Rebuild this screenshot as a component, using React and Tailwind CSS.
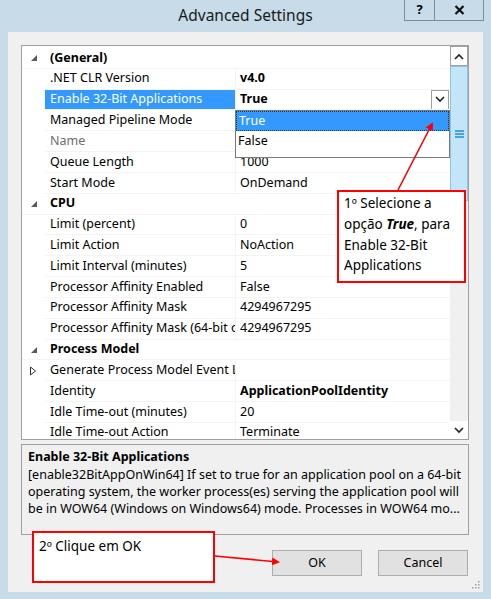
import React from "react";

const font = { fontFamily: '"Noto Sans", "Open Sans", sans-serif' };

const rows = [
  { type: "cat", name: "(General)" },
  { name: ".NET CLR Version", value: "v4.0", bold: true },
  { name: "Enable 32-Bit Applications", value: "True", bold: true, selected: true },
  { name: "Managed Pipeline Mode", value: "Integrated" },
  { name: "Name", value: "DefaultAppPool", gray: true },
  { name: "Queue Length", value: "1000" },
  { name: "Start Mode", value: "OnDemand" },
  { type: "cat", name: "CPU" },
  { name: "Limit (percent)", value: "0" },
  { name: "Limit Action", value: "NoAction" },
  { name: "Limit Interval (minutes)", value: "5" },
  { name: "Processor Affinity Enabled", value: "False" },
  { name: "Processor Affinity Mask", value: "4294967295" },
  { name: "Processor Affinity Mask (64-bit option)", value: "4294967295" },
  { type: "cat", name: "Process Model" },
  { name: "Generate Process Model Event Log Entry", value: "", collapsed: true },
  { name: "Identity", value: "ApplicationPoolIdentity", bold: true },
  { name: "Idle Time-out (minutes)", value: "20" },
  { name: "Idle Time-out Action", value: "Terminate" },
];

function Expanded() {
  return (
    <svg width="8" height="8" viewBox="0 0 8 8">
      <path d="M7 1 L7 7 L1 7 Z" fill="#595959" />
    </svg>
  );
}
function Collapsed() {
  return (
    <svg width="8" height="10" viewBox="0 0 8 10">
      <path d="M1.5 1 L6.5 5 L1.5 9 Z" fill="none" stroke="#333" strokeWidth="1" />
    </svg>
  );
}
function Chevron({ up }) {
  return (
    <svg width="10" height="7" viewBox="0 0 10 7">
      <path d={up ? "M1 6 L5 2 L9 6" : "M1 1 L5 5 L9 1"} fill="none" stroke="#222" strokeWidth="1.6" />
    </svg>
  );
}

function Row({ r }) {
  if (r.type === "cat") {
    return (
      <div className="flex h-[20.83px] shrink-0 items-center border-b border-[#f4f4f4]">
        <div className="flex w-[23px] shrink-0 items-center justify-center pl-[1px]">
          <Expanded />
        </div>
        <div className="pl-[5px] text-[12.5px] font-bold text-black">{r.name}</div>
      </div>
    );
  }
  return (
    <div className="flex h-[20.83px] shrink-0 items-center">
      <div className="flex w-[23px] shrink-0 items-center justify-center pr-[2px]">
        {r.collapsed ? <Collapsed /> : null}
      </div>
      <div
        className={
          "flex h-full w-[190px] shrink-0 items-center overflow-hidden whitespace-nowrap border-b border-[#f4f4f4] pl-[5px] text-[12.5px] " +
          (r.selected ? "bg-[#3399ff] text-white" : r.gray ? "text-[#6d6d6d]" : "text-black")
        }
      >
        {r.name}
      </div>
      <div className="flex h-full flex-1 items-center overflow-hidden whitespace-nowrap border-b border-l border-[#f4f4f4] pl-[4px] text-[12.5px]">
        <span className={(r.bold ? "font-bold " : "") + "text-black"}>{r.value}</span>
        {r.selected ? (
          <div className="ml-auto mr-[1px] flex h-[20px] w-[18px] items-center justify-center border border-[#a0a0a0] bg-white">
            <Chevron />
          </div>
        ) : null}
      </div>
    </div>
  );
}

export default function App() {
  return (
    <div className="relative h-[599px] w-[491px] overflow-hidden bg-[#c7dbe8]" style={font}>
      {/* Title bar */}
      <div className="relative flex h-[32px] items-center justify-center">
        <div className="text-[15.5px] text-[#1a1a1a]">Advanced Settings</div>
        <div className="absolute right-[7px] top-0 flex">
          <div className="flex h-[21px] w-[31px] items-center justify-center border border-t-0 border-[#7f8d98] bg-[#c7dbe8] text-[13px] font-bold text-black">
            ?
          </div>
          <div className="flex h-[21px] w-[49px] items-center justify-center border border-l-0 border-t-0 border-[#7f8d98] bg-[#c7dbe8]">
            <svg width="11" height="10" viewBox="0 0 11 10">
              <path d="M1.5 1 L9.5 9 M9.5 1 L1.5 9" stroke="#111" strokeWidth="2.2" />
            </svg>
          </div>
        </div>
      </div>

      {/* Client area */}
      <div className="mx-[8px] flex h-[560px] flex-col bg-[#f0f0f0] pl-[13px] pr-[14px] pt-[13px]">
        {/* Property grid */}
        <div className="flex h-[395px] w-[448px] border border-[#a0a0a0] bg-white">
          <div className="flex flex-1 flex-col overflow-hidden pt-[2px]">
            {rows.map((r, i) => (
              <Row key={i} r={r} />
            ))}
          </div>
          {/* Scrollbar */}
          <div className="flex w-[18px] flex-col bg-[#f0f0f0]">
            <div className="flex h-[20px] items-center justify-center border border-[#a0a0a0] bg-white">
              <Chevron up />
            </div>
            <div className="flex h-[135px] items-center justify-center border border-[#86c6e8] bg-[#c4e5f7]">
              <svg width="9" height="8" viewBox="0 0 9 8">
                <path d="M0 1 H9 M0 4 H9 M0 7 H9" stroke="#1e8fd6" strokeWidth="1.4" />
              </svg>
            </div>
            <div className="flex-1" />
            <div className="flex h-[18px] items-center justify-center bg-white">
              <Chevron />
            </div>
          </div>
        </div>

        {/* Description */}
        <div className="mt-[4px] h-[91px] w-[448px] border border-[#a0a0a0] bg-[#f0f0f0] px-[6px] pt-[3px]">
          <div className="text-[12.5px] font-bold leading-[18px] text-black">Enable 32-Bit Applications</div>
          <div className="text-[12.5px] leading-[17px] text-black">
            [enable32BitAppOnWin64] If set to true for an application pool on a 64-bit operating system, the worker process(es) serving the application pool will be in WOW64 (Windows on Windows64) mode. Processes in WOW64 mo...
          </div>
        </div>

        {/* Buttons */}
        <div className="mt-[15px] flex justify-end gap-[16px] pr-[1px]">
          <button className="h-[26px] w-[90px] border border-[#adadad] bg-[#e1e1e1] text-[12.5px] text-black">OK</button>
          <button className="h-[26px] w-[90px] border border-[#adadad] bg-[#e1e1e1] text-[12.5px] text-black">Cancel</button>
        </div>
        <div className="mt-auto flex justify-end pb-[3px]">
          <svg width="8" height="8" viewBox="0 0 8 8" className="mr-[-11px]">
            <rect x="6" y="0" width="1.5" height="1.5" fill="#a0a0a0" />
            <rect x="3" y="3" width="1.5" height="1.5" fill="#a0a0a0" />
            <rect x="6" y="3" width="1.5" height="1.5" fill="#a0a0a0" />
            <rect x="0" y="6" width="1.5" height="1.5" fill="#a0a0a0" />
            <rect x="3" y="6" width="1.5" height="1.5" fill="#a0a0a0" />
            <rect x="6" y="6" width="1.5" height="1.5" fill="#a0a0a0" />
          </svg>
        </div>
      </div>

      {/* Dropdown list overlay */}
      <div className="absolute left-[235px] top-[110px] h-[48px] w-[215px] border border-[#7a7a7a] bg-white">
        <div className="flex h-[20px] items-center border border-dotted border-[#1a3a60] bg-[#3399ff] pl-[2px] text-[12.5px] text-white">
          True
        </div>
        <div className="flex h-[20px] items-center pl-[2px] text-[12.5px] text-black">False</div>
      </div>

      {/* Callout 1 */}
      <div className="absolute left-[337px] top-[190px] h-[93px] w-[129px] border-2 border-[#ff0000] bg-white pl-[5px] pt-[1px] text-[13.5px] leading-[20.8px] text-black">
        1º Selecione a opção <b><i>True</i></b>, para Enable 32-Bit Applications
      </div>

      {/* Callout 2 */}
      <div className="absolute left-[32px] top-[531px] h-[52px] w-[183px] border-2 border-[#ff0000] bg-white pl-[5px] pt-[3px] text-[13.5px] text-black">
        2º Clique em OK
      </div>

      {/* Arrows */}
      <svg className="pointer-events-none absolute left-0 top-0" width="491" height="599">
        <defs>
          <marker id="ah" markerWidth="8" markerHeight="8" refX="6" refY="4" orient="auto" markerUnits="userSpaceOnUse">
            <path d="M0 0 L8 4 L0 8 Z" fill="#ff0000" />
          </marker>
        </defs>
        <line x1="398" y1="190" x2="432" y2="124" stroke="#ff0000" strokeWidth="1.6" markerEnd="url(#ah)" />
        <line x1="215" y1="556" x2="278" y2="562" stroke="#ff0000" strokeWidth="1.6" markerEnd="url(#ah)" />
      </svg>
    </div>
  );
}
